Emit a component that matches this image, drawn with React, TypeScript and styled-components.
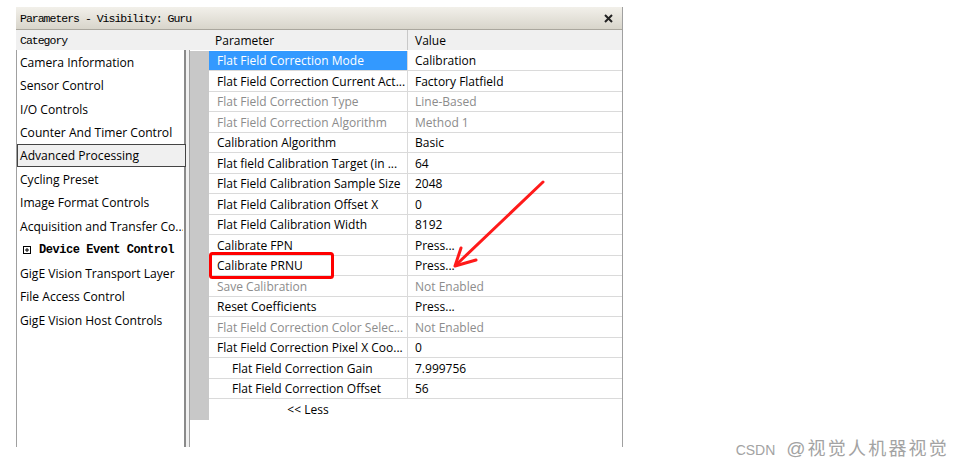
import React from 'react';
import styled, { createGlobalStyle } from 'styled-components';

type ParamRow = {
  name: string;
  value: string;
  selected?: boolean;
  disabled?: boolean;
  indent?: boolean;
};

const categories = [
  'Camera Information',
  'Sensor Control',
  'I/O Controls',
  'Counter And Timer Control',
  'Advanced Processing',
  'Cycling Preset',
  'Image Format Controls',
  'Acquisition and Transfer Co...',
  'Device Event Control',
  'GigE Vision Transport Layer',
  'File Access Control',
  'GigE Vision Host Controls',
];

const rows: ParamRow[] = [
  { name: 'Flat Field Correction Mode', value: 'Calibration', selected: true },
  { name: 'Flat Field Correction Current Act...', value: 'Factory Flatfield' },
  { name: 'Flat Field Correction Type', value: 'Line-Based', disabled: true },
  { name: 'Flat Field Correction Algorithm', value: 'Method 1', disabled: true },
  { name: 'Calibration Algorithm', value: 'Basic' },
  { name: 'Flat field Calibration Target (in ...', value: '64' },
  { name: 'Flat Field Calibration Sample Size', value: '2048' },
  { name: 'Flat Field Calibration Offset X', value: '0' },
  { name: 'Flat Field Calibration Width', value: '8192' },
  { name: 'Calibrate FPN', value: 'Press...' },
  { name: 'Calibrate PRNU', value: 'Press...' },
  { name: 'Save Calibration', value: 'Not Enabled', disabled: true },
  { name: 'Reset Coefficients', value: 'Press...' },
  { name: 'Flat Field Correction Color Selec...', value: 'Not Enabled', disabled: true },
  { name: 'Flat Field Correction Pixel X Coo...', value: '0' },
  { name: 'Flat Field Correction Gain', value: '7.999756', indent: true },
  { name: 'Flat Field Correction Offset', value: '56', indent: true },
];

const GlobalStyle = createGlobalStyle`
  html, body {
    margin: 0;
    padding: 0;
    background: #fff;
  }
  body {
    font-family: "Open Sans", "Liberation Sans", sans-serif;
    overflow: hidden;
  }
`;

const Page = styled.div`
  position: relative;
  width: 963px;
  height: 468px;
  box-sizing: border-box;
  padding: 7px 0 0 16px;
`;

const Window = styled.div`
  width: 607px;
  height: 440px;
  display: flex;
  flex-direction: column;
  background: #f0f0f0;
  border-right: 1px solid #a0a0a0;
  box-sizing: border-box;
`;

const TitleBar = styled.div`
  height: 22px;
  flex: none;
  display: flex;
  align-items: center;
  justify-content: space-between;
  padding: 0 9px 0 4px;
  background: linear-gradient(#f2f0ea, #d8d5cb);
  border-bottom: 1px solid #aaa79e;
  font-family: "Liberation Mono", monospace;
  font-size: 11.5px;
  letter-spacing: -1px;
  color: #000;
`;

const Body = styled.div`
  flex: 1;
  display: flex;
  min-height: 0;
`;

const LeftPane = styled.div`
  width: 170px;
  flex: none;
  display: flex;
  flex-direction: column;
`;

const RightPane = styled.div`
  flex: 1;
  margin-left: 3px;
  display: flex;
  flex-direction: column;
`;

const PaneHeader = styled.div`
  height: 20px;
  flex: none;
  display: flex;
  align-items: center;
  font-size: 12px;
  color: #000;
`;

const MonoLabel = styled.span`
  font-family: "Liberation Mono", monospace;
  font-size: 11.5px;
  letter-spacing: -1px;
  padding-left: 4px;
`;

const HeaderCell = styled.div<{ $width?: number; $divider?: boolean }>`
  width: ${(p) => (p.$width ? `${p.$width}px` : 'auto')};
  flex: ${(p) => (p.$width ? 'none' : '1')};
  height: 100%;
  display: flex;
  align-items: center;
  box-sizing: border-box;
  padding-left: ${(p) => (p.$divider ? '7px' : '6px')};
  border-left: ${(p) => (p.$divider ? '1px solid #c8c8c8' : 'none')};
`;

const ListBox = styled.div`
  flex: 1;
  background: #fff;
  border-left: 1px solid #a0a0a0;
  border-right: 2px solid #8a8a8a;
  display: flex;
  flex-direction: column;
`;

const CategoryItem = styled.div<{ $selected?: boolean; $group?: boolean }>`
  height: 23.45px;
  flex: none;
  display: flex;
  align-items: center;
  gap: 8px;
  box-sizing: border-box;
  padding-left: ${(p) => (p.$group ? '5px' : '2px')};
  padding-top: 1px;
  margin-right: ${(p) => (p.$selected ? '-2px' : '0')};
  background: ${(p) => (p.$selected ? '#f0f0f0' : 'transparent')};
  border: ${(p) => (p.$selected ? '1px solid #444' : '1px solid transparent')};
  font-size: 12.1px;
  color: #000;
  white-space: nowrap;
  overflow: hidden;
`;

const GroupLabel = styled.span`
  font-family: "Liberation Mono", monospace;
  font-weight: bold;
  font-size: 12px;
  letter-spacing: -0.45px;
`;

const Grid = styled.div`
  flex: 1;
  background: #fff;
  border-left: 1px solid #a0a0a0;
  padding-top: 0.5px;
  display: flex;
  flex-direction: column;
`;

const Row = styled.div`
  height: 20.5px;
  flex: none;
  display: flex;
`;

const RowHead = styled.div`
  width: 19px;
  flex: none;
  background: #c8c8c8;
`;

const Cell = styled.div<{ $selected?: boolean; $disabled?: boolean; $indent?: boolean; $value?: boolean }>`
  width: ${(p) => (p.$value ? 'auto' : '198px')};
  flex: ${(p) => (p.$value ? '1' : 'none')};
  display: flex;
  align-items: center;
  box-sizing: border-box;
  padding-left: ${(p) => (p.$value ? '7px' : p.$indent ? '23px' : '8px')};
  padding-top: 1px;
  border-bottom: 1px solid #dadada;
  border-left: ${(p) => (p.$value ? '1px solid #dadada' : 'none')};
  background: ${(p) => (p.$selected ? '#3399ff' : '#fff')};
  color: ${(p) => (p.$selected ? '#fff' : p.$disabled ? '#8c8c8c' : '#000')};
  font-size: 12px;
  white-space: nowrap;
  overflow: hidden;
`;

const LessCell = styled.div`
  width: 198px;
  flex: none;
  display: flex;
  align-items: center;
  justify-content: center;
  padding-top: 1px;
  font-size: 12px;
  color: #000;
`;

const Overlay = styled.svg`
  position: absolute;
  left: 0;
  top: 0;
  pointer-events: none;
`;

const Watermark = styled.div`
  position: absolute;
  right: 14px;
  top: 434px;
  display: flex;
  align-items: baseline;
  color: #a3a3a3;
`;

const WatermarkLatin = styled.span`
  font-family: "Liberation Sans", Arial, sans-serif;
  font-size: 14px;
  margin-right: 11px;
`;

const WatermarkAt = styled.span`
  font-family: "Liberation Sans", Arial, sans-serif;
  font-size: 19px;
  margin-right: 2px;
`;

const WatermarkCjk = styled.span`
  font-family: "Noto Sans CJK SC", sans-serif;
  font-size: 18px;
  letter-spacing: 2.2px;
`;

const CloseIcon = () => (
  <svg width="9" height="9" viewBox="0 0 9 9">
    <path d="M1 1 L8 8 M8 1 L1 8" stroke="#222" strokeWidth="2" />
  </svg>
);

const ExpandIcon = () => (
  <svg width="8" height="8" viewBox="0 0 8 8">
    <rect x="0.5" y="0.5" width="7" height="7" fill="none" stroke="#000" />
    <path d="M2 4 H6 M4 2 V6" stroke="#000" />
  </svg>
);

export default function App() {
  return (
    <>
      <GlobalStyle />
      <Page>
        <Window>
          <TitleBar>
            <span>Parameters - Visibility: Guru</span>
            <CloseIcon />
          </TitleBar>
          <Body>
            <LeftPane>
              <PaneHeader>
                <MonoLabel>Category</MonoLabel>
              </PaneHeader>
              <ListBox>
                {categories.map((c) =>
                  c === 'Device Event Control' ? (
                    <CategoryItem key={c} $group>
                      <ExpandIcon />
                      <GroupLabel>{c}</GroupLabel>
                    </CategoryItem>
                  ) : (
                    <CategoryItem key={c} $selected={c === 'Advanced Processing'}>
                      {c}
                    </CategoryItem>
                  )
                )}
              </ListBox>
            </LeftPane>
            <RightPane>
              <PaneHeader>
                <HeaderCell $width={20} />
                <HeaderCell $width={198}>Parameter</HeaderCell>
                <HeaderCell $divider>Value</HeaderCell>
              </PaneHeader>
              <Grid>
                {rows.map((r) => (
                  <Row key={r.name}>
                    <RowHead />
                    <Cell $selected={r.selected} $disabled={r.disabled} $indent={r.indent}>
                      {r.name}
                    </Cell>
                    <Cell $value $disabled={r.disabled}>
                      {r.value}
                    </Cell>
                  </Row>
                ))}
                <Row>
                  <RowHead />
                  <LessCell>&lt;&lt; Less</LessCell>
                </Row>
              </Grid>
            </RightPane>
          </Body>
        </Window>

        <Overlay width="963" height="468" viewBox="0 0 963 468">
          <rect x="210.5" y="253.5" width="122" height="24" rx="2" fill="none" stroke="#ff0000" strokeWidth="3" />
          <line x1="543" y1="182" x2="457" y2="264" stroke="#ff1a1a" strokeWidth="3" strokeLinecap="round" />
          <polyline points="461,248 455,266 476,260" fill="none" stroke="#ff1a1a" strokeWidth="3" strokeLinecap="round" strokeLinejoin="round" />
        </Overlay>

        <Watermark>
          <WatermarkLatin>CSDN</WatermarkLatin>
          <WatermarkAt>@</WatermarkAt>
          <WatermarkCjk>视觉人机器视觉</WatermarkCjk>
        </Watermark>
      </Page>
    </>
  );
}
